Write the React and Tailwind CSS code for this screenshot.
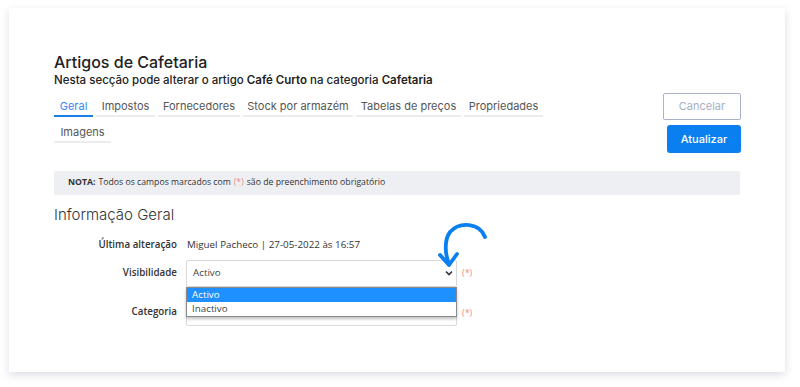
import React from "react";

const poppins = { fontFamily: "Inter, 'Noto Sans', sans-serif" };

function Tab({ label, active, w }) {
  return (
    <div
      className={`flex h-[22px] items-start justify-center border-b-2 pt-[3px] text-[11px] ${
        active ? "border-[#1a7fe6] text-[#3b82f6]" : "border-[#ececec] text-[#555]"
      }`}
      style={{ width: w }}
    >
      {label}
    </div>
  );
}

export default function App() {
  return (
    <div className="h-[387px] w-[800px] bg-white pl-[9px] pt-[8px]" style={poppins}>
      <div className="relative h-[364px] w-[776px] bg-white shadow-[0_3px_8px_rgba(60,70,110,0.18)]">
        <div className="flex pl-[45px] pr-[44px] pt-[43px]">
          <div className="flex-1">
            <h1 className="text-[16px] font-medium leading-[22px] text-[#222]">Artigos de Cafetaria</h1>
            <p className="text-[11.5px] font-medium leading-[15px] text-[#222]">
              Nesta secção pode alterar o artigo <b className="font-semibold">Café Curto</b> na categoria{" "}
              <b className="font-semibold">Cafetaria</b>
            </p>
            <div className="mt-[7px] flex gap-[3px]">
              <Tab label="Geral" active w="39px" />
              <Tab label="Impostos" w="59px" />
              <Tab label="Fornecedores" w="82px" />
              <Tab label="Stock por armazém" w="110px" />
              <Tab label="Tabelas de preços" w="105px" />
              <Tab label="Propriedades" w="79px" />
            </div>
            <div className="mt-[4px] flex">
              <Tab label="Imagens" w="57px" />
            </div>
          </div>
          <div className="flex flex-col items-end pt-[42px]">
            <button className="h-[27px] w-[78px] rounded-[2px] border border-[#a9b2c6] text-[11px] text-[#a7afc2]">
              Cancelar
            </button>
            <button className="mt-[5px] h-[28px] w-[74px] rounded-[3px] bg-[#0a7ff0] text-[11px] font-medium text-white">
              Atualizar
            </button>
          </div>
        </div>

        <div
          className="mx-[45px] mt-[18px] flex h-[24px] items-center rounded-[2px] bg-[#eeeff3] px-[14px] text-[8.7px] text-[#333]"
          style={{ fontFamily: "'Open Sans', sans-serif" }}
        >
          <b className="mr-[3px] font-bold">NOTA:</b> Todos os campos marcados com{" "}
          <span className="mx-[3px] text-[#f08a8a]">(*)</span> são de preenchimento obrigatório
        </div>

        <h2 className="ml-[45px] mt-[10px] text-[15px] font-light leading-[20px] text-[#333]">Informação Geral</h2>

        <div className="mt-[13px] text-[9.8px] text-[#333]" style={{ fontFamily: "'Open Sans', sans-serif" }}>
          <div className="flex items-center">
            <div className="w-[168px] text-right font-semibold">Última alteração</div>
            <div className="ml-[10px]">Miguel Pacheco | 27-05-2022 às 16:57</div>
          </div>
          <div className="mt-[7px] flex items-center">
            <div className="w-[168px] text-right font-semibold">Visibilidade</div>
            <div className="relative ml-[9px] flex h-[27px] w-[271px] items-center rounded-[2px] border border-[#d9d9d9] pl-[6px] pr-[3px] shadow-[0_1px_2px_rgba(0,0,0,0.06)]">
              <span className="flex-1 text-[#444]">Activo</span>
              <svg width="8" height="6" viewBox="0 0 8 6">
                <path d="M1 1.5 L4 4.5 L7 1.5" fill="none" stroke="#333" strokeWidth="1.6" />
              </svg>
              <div className="absolute left-[-1px] top-[26px] z-10 w-[271px] border border-[#8a8a8a] bg-white shadow-[0_2px_3px_rgba(0,0,0,0.25)]">
                <div className="h-[14px] bg-[#1e90ff] pl-[5px] leading-[14px] text-white">Activo</div>
                <div className="h-[14px] pl-[5px] leading-[14px] text-[#444]">Inactivo</div>
              </div>
            </div>
            <span className="ml-[5px] text-[9px] text-[#f08a8a]">(*)</span>
          </div>
          <div className="mt-[13px] flex items-center">
            <div className="w-[168px] text-right font-semibold">Categoria</div>
            <div className="ml-[9px] h-[26px] w-[271px] rounded-[2px] border border-[#d9d9d9]" />
            <span className="ml-[5px] text-[9px] text-[#f08a8a]">(*)</span>
          </div>
        </div>

        <svg className="absolute left-0 top-0 z-20" width="776" height="364" style={{ pointerEvents: "none" }}>
          <g transform="translate(-9,-8)" fill="none" stroke="#0a7ff0" strokeWidth="3.8" strokeLinecap="round" strokeLinejoin="round">
            <path d="M485 237 C480 223, 460 221, 450 232 C444 240, 445 254, 449 264" />
            <path d="M440 255 L449 265 L457 254" />
          </g>
        </svg>
      </div>
    </div>
  );
}
